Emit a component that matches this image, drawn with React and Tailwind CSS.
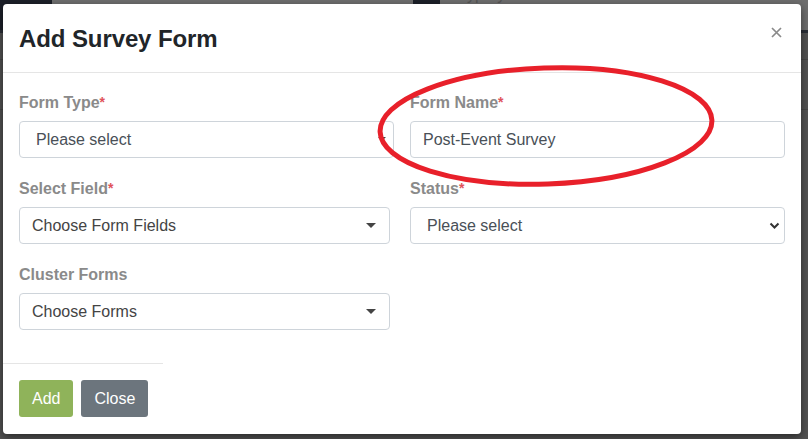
import React from 'react';

const font = { fontFamily: '"Liberation Sans", Arial, sans-serif' };

function Label({ text, required }) {
  return (
    <label className="block text-[16px] leading-[21px] font-bold text-[#8a8a8a] mb-2">
      {text}
      {required && <span className="text-[#e0525a] text-[14px] align-top">*</span>}
    </label>
  );
}

function Caret() {
  return (
    <svg width="10" height="6" viewBox="0 0 10 6" className="shrink-0">
      <path d="M0 0 L10 0 L5 5 Z" fill="#444" />
    </svg>
  );
}

function Chevron() {
  return (
    <svg width="11" height="8" viewBox="0 0 11 8" className="shrink-0">
      <path d="M1.5 1.5 L5.5 5.5 L9.5 1.5" fill="none" stroke="#333" strokeWidth="2" />
    </svg>
  );
}

export default function App() {
  return (
    <div className="relative w-[808px] h-[439px] overflow-hidden bg-[#525252]" style={font}>
      {/* dimmed page behind the modal */}
      <div className="flex h-[30px] text-[16px] text-[#3a3a3a]">
        <div className="w-[52px] bg-[#1c2029]" />
        <div className="w-[361px] bg-[#6e6e6e] pl-[13px] overflow-hidden">
          <div className="-mt-[15px] leading-[20px] whitespace-nowrap">International Association of Virtual Conferences ▲</div>
        </div>
        <div className="w-[27px] bg-[#1c2029]" />
        <div className="flex-1 bg-[#6e6e6e] pl-[18px] overflow-hidden">
          <div className="-mt-[15px] leading-[20px] whitespace-nowrap text-[#555]">Type your search words here</div>
        </div>
      </div>
      <div className="h-[3px] bg-[#2a2e36]" />
      <div className="h-[27px] border-b border-[#474747]" />
      <div className="h-[50px] border-b border-[#474747]" />

      {/* modal */}
      <div className="absolute top-[4px] left-[3px] w-[798px] h-[430px] bg-white rounded-[4px] shadow-[0_3px_9px_rgba(0,0,0,0.5)] flex flex-col">
        <div className="h-[69px] border-b border-[#e5e5e5] flex items-start justify-between px-4">
          <h4 className="text-[24px] leading-[28px] mt-[21px] font-bold text-[#212529] tracking-[-0.1px]">Add Survey Form</h4>
          <svg width="11" height="11" viewBox="0 0 11 11" className="mt-[23px] mr-[3px]">
            <path d="M1 1 L10 10 M10 1 L1 10" stroke="#8a8a8a" strokeWidth="1.7" />
          </svg>
        </div>

        <div className="px-4 pt-[19px] pb-[13px] grid grid-cols-2 gap-x-4">
          <div className="mb-5">
            <Label text="Form Type" required />
            <div className="h-[37px] border border-[#ced4da] rounded-[4px] flex items-center justify-between pl-[16px] pr-[7px] text-[16px] text-[#495057]">
              <span>Please select</span>
              <svg width="8" height="5" viewBox="0 0 8 5"><path d="M0 0 L8 0 L4 4 Z" fill="#444" /></svg>
            </div>
          </div>
          <div className="mb-5">
            <Label text="Form Name" required />
            <div className="h-[37px] border border-[#ced4da] rounded-[4px] flex items-center pl-[12px] text-[16px] text-[#495057]">
              Post-Event Survey
            </div>
          </div>

          <div className="mb-5">
            <Label text="Select Field" required />
            <div className="w-[371px] h-[37px] border border-[#ced4da] rounded-[4px] flex items-center justify-between pl-[12px] pr-[13px] text-[16px] text-[#444]">
              <span>Choose Form Fields</span>
              <Caret />
            </div>
          </div>
          <div className="mb-5">
            <Label text="Status" required />
            <div className="h-[37px] border border-[#ced4da] rounded-[4px] flex items-center justify-between pl-[16px] pr-[4px] text-[16px] text-[#495057]">
              <span>Please select</span>
              <Chevron />
            </div>
          </div>

          <div className="mb-5">
            <Label text="Cluster Forms" />
            <div className="w-[371px] h-[37px] border border-[#ced4da] rounded-[4px] flex items-center justify-between pl-[12px] pr-[13px] text-[16px] text-[#444]">
              <span>Choose Forms</span>
              <Caret />
            </div>
          </div>
        </div>

        <div className="w-[160px] border-t border-[#e5e5e5]" />
        <div className="flex gap-2 px-4 pt-4">
          <button className="h-[37px] px-[13px] rounded-[3px] bg-[#8fb35a] text-white text-[16px]">Add</button>
          <button className="h-[37px] px-[13px] rounded-[3px] bg-[#6c757d] text-white text-[16px]">Close</button>
        </div>
      </div>

      {/* hand-drawn highlight */}
      <svg className="absolute left-0 top-0 pointer-events-none" width="808" height="439" viewBox="0 0 808 439">
        <ellipse cx="546" cy="126" rx="166" ry="58" transform="rotate(-2 546 126)" fill="none" stroke="#e8202a" strokeWidth="5" />
      </svg>
    </div>
  );
}
